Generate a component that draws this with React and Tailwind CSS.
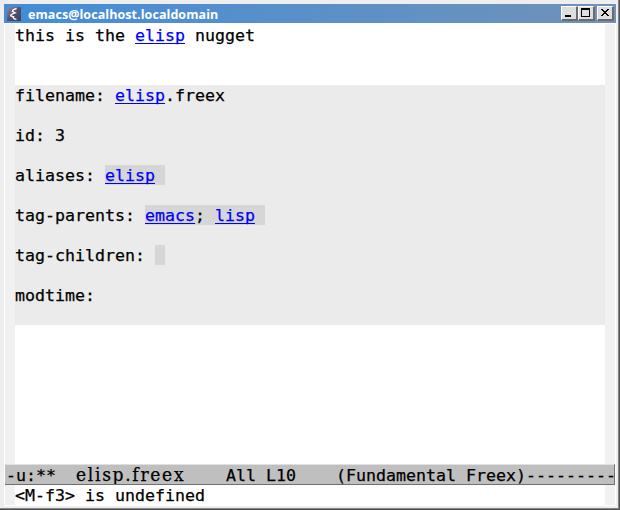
import React from "react";

const Link = ({ children }) => (
  <span className="inline-block h-[19px] bg-[linear-gradient(#0000ff,#0000ff)] bg-[length:100%_1px] bg-bottom bg-no-repeat align-top leading-[22px] text-[#0000ff]">{children}</span>
);

const Line = ({ children }) => <div className="h-5 whitespace-pre leading-[22px]">{children}</div>;

const Tag = ({ children }) => <span className="inline-block h-5 bg-[#d6d6d6] align-top">{children}</span>;

const buttonClass =
  "flex h-[15px] w-[17px] shrink-0 border-t border-l border-r-2 border-b-2 border-t-white border-l-white border-r-[#6b6b6b] border-b-[#6b6b6b] bg-[#dedede]";

function Logo() {
  return (
    <svg className="ml-[3px] h-[14px] w-[14px] shrink-0" viewBox="0 0 14 14">
      <defs>
        <linearGradient id="logo" x1="0" y1="0" x2="1" y2="1">
          <stop offset="0" stopColor="#8a8ca8" />
          <stop offset="0.5" stopColor="#50506c" />
          <stop offset="1" stopColor="#443f58" />
        </linearGradient>
      </defs>
      <rect width="14" height="14" fill="url(#logo)" />
      <path d="M9.6 1.5Q5.4 2.6 5.4 4.3L8.2 5.9Q3.6 7.3 3.6 8.8L6.6 9.8Q5 11.6 9.4 12.3" fill="none" stroke="#fff" strokeWidth="1.3" />
    </svg>
  );
}

function TitleBar() {
  return (
    <div className="flex h-[19px] items-center bg-linear-to-r from-[#418dd8] to-[#6f92b8] pr-[2px]">
      <Logo />
      <span className="ml-[7px] grow pt-px font-['Open_Sans',sans-serif] text-[12.5px] leading-[19px] font-bold tracking-[0.07px] text-white [-webkit-text-stroke:0px]">
        emacs@localhost.localdomain
      </span>
      <div className="flex">
        <div className={buttonClass}>
          <div className="mt-[8px] ml-[3px] h-[2px] w-[6px] bg-black" />
        </div>
        <div className={buttonClass}>
          <div className="mt-px ml-[2px] h-[9px] w-[9px] border border-t-2 border-black" />
        </div>
        <div className={"ml-[2px] " + buttonClass}>
          <svg className="mt-[2px] ml-[3px] h-[7px] w-[8px]" viewBox="0 0 8 7" shapeRendering="crispEdges">
            <path d="M0 0h2v1h1v1h2v-1h1v-1h2v1h-1v1h-1v1h-1v1h1v1h1v1h1v1h-2v-1h-1v-1h-2v1h-1v1h-2v-1h1v-1h1v-1h1v-1h-1v-1h-1v-1h-1z" />
          </svg>
        </div>
      </div>
    </div>
  );
}

export default function App() {
  return (
    <div className="flex h-[510px] w-[620px] border-r border-b border-[#505050] bg-[#eeeeee]">
      <div className="flex h-[509px] w-[619px] flex-col border-r border-b border-[#858585] pt-1 pr-[2px] pb-[2px] pl-1 font-['DejaVu_Sans_Mono',monospace] text-[16.61px] text-black [-webkit-text-stroke:0.25px]">
        <TitleBar />
        <div className="flex h-[483px] w-[612px] flex-col border border-white bg-white">
          <div className="flex h-[440px] shrink-0 bg-[#f1f1f1]">
            <div className="w-[10px]" />
            <div className="w-[590px] bg-white pt-px">
              <Line>this is the <Link>elisp</Link> nugget</Line>
              <div className="mt-10 h-[240px] bg-[#ebebeb]">
                <Line>filename: <Link>elisp</Link>.freex</Line>
                <Line> </Line>
                <Line>id: 3</Line>
                <Line> </Line>
                <Line>aliases: <Tag><Link>elisp</Link> </Tag></Line>
                <Line> </Line>
                <Line>tag-parents: <Tag><Link>emacs</Link>; <Link>lisp</Link> </Tag></Line>
                <Line> </Line>
                <Line>tag-children: <Tag> </Tag></Line>
                <Line> </Line>
                <Line>modtime:</Line>
              </div>
            </div>
          </div>
          <div className="flex h-[21px] shrink-0 overflow-hidden border-t border-r border-b border-t-[#e0e0e0] border-r-[#707070] border-b-[#707070] bg-[#bfbfbf] pl-px leading-[21px] whitespace-pre">
            <span className="w-[70px] shrink-0">-u:**</span>
            <span className="w-[150px] shrink-0 font-['DejaVu_Serif_Condensed','DejaVu_Serif',serif] text-[19px] leading-[19px] tracking-[1.7px]">elisp.freex</span>
            <span className="shrink-0">All L10    (Fundamental Freex)---------</span>
          </div>
          <div className="flex h-5 shrink-0 bg-[#f1f1f1] pl-[10px] leading-[22px]">
            <div className="w-[590px] bg-white">&lt;M-f3&gt; is undefined</div>
          </div>
        </div>
      </div>
    </div>
  );
}
